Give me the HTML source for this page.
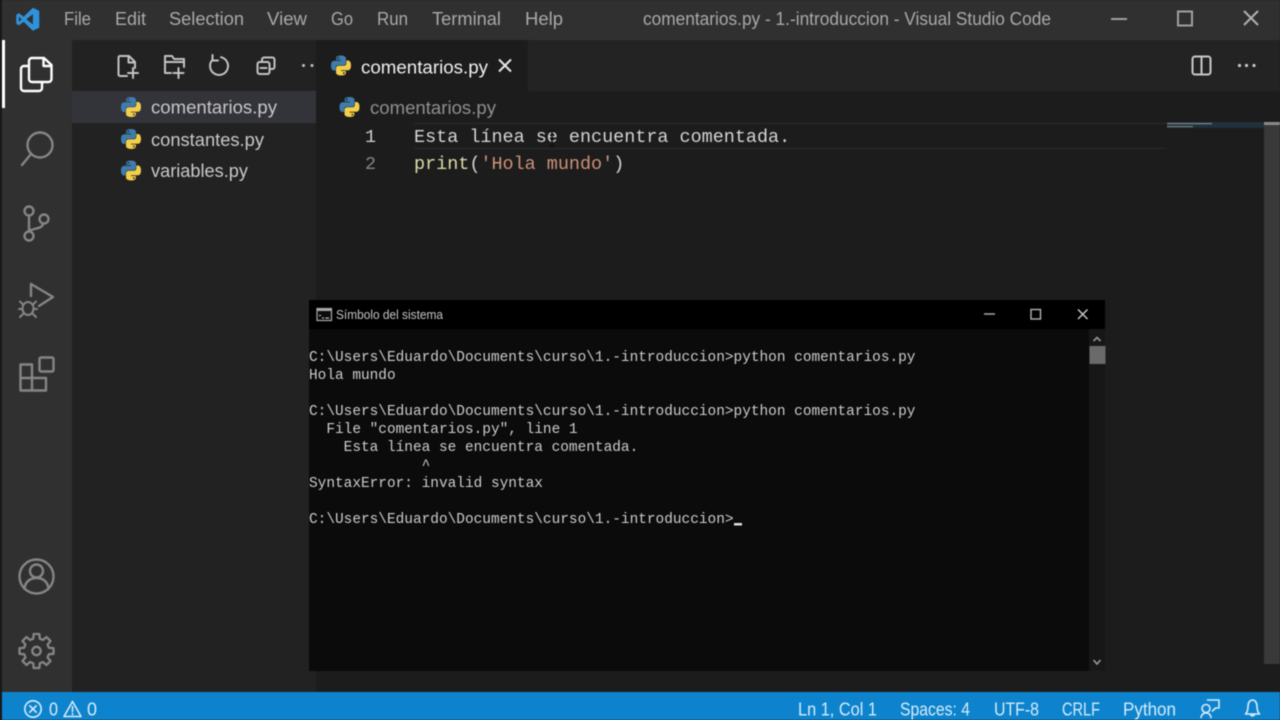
<!DOCTYPE html>
<html lang="es">
<head>
<meta charset="utf-8">
<title>comentarios.py - 1.-introduccion - Visual Studio Code</title>
<style>
html,body{margin:0;padding:0;width:1280px;height:720px;overflow:hidden;background:#1c1c1c}
svg{display:block;filter:blur(.45px)}
text{font-family:"Liberation Sans",sans-serif;font-size:18px;white-space:pre}
.m{font-family:"Liberation Mono",monospace;font-size:18.45px}
.t{font-family:"Liberation Mono",monospace;font-size:14.45px;fill:#cccccc}
.menu{fill:#a9a9a9}
.st{fill:#d5ecfa}
.i{fill:none;stroke:#858585;stroke-width:2.4;stroke-linejoin:round;stroke-linecap:round}
.b{fill:none;stroke:#c2c2c2;stroke-width:2;stroke-linejoin:round;stroke-linecap:round}
.s{fill:none;stroke:#d5ecfa;stroke-width:1.6;stroke-linejoin:round;stroke-linecap:round}
</style>
</head>
<body>
<svg width="1280" height="720" viewBox="0 0 1280 720" xmlns="http://www.w3.org/2000/svg">
<defs>
<g id="py">
<path fill="#3f7cad" d="M9.9 0C4.9 0 5.2 2.2 5.2 2.2V4.5h4.8v.7H3.3S0 4.8 0 10s2.9 5 2.9 5h1.7v-2.4s-.1-2.9 2.8-2.9h4.900s2.700 0 2.700-2.600V2.700S14.900 0 9.900 0zM7.200 1.500a.9.9 0 1 1 0 1.800.9.9 0 0 1 0-1.800z"/>
<path fill="#f2cf4a" d="M10.100 20c5 0 4.700-2.200 4.700-2.200v-2.300H10v-.7h6.700S20 15.200 20 10s-2.900-5-2.900-5h-1.700v2.400s.1 2.900-2.800 2.900H7.700s-2.700 0-2.700 2.600v4.400S5.100 20 10.100 20zm2.700-1.500a.9.9 0 1 1 0-1.800.9.9 0 0 1 0 1.800z"/>
</g>
<path id="tooth" d="M-4.900-11.600L-3.200-12.400L-2.900-17H2.900L3.200-12.400L4.900-11.600" fill="none" stroke="#858585" stroke-width="2.300" stroke-linejoin="round"/>
</defs>

<!-- base panels -->
<rect x="0" y="0" width="1280" height="720" fill="#1c1c1c"/>
<rect x="0" y="0" width="1280" height="40" fill="#303030"/>
<rect x="2" y="40" width="70" height="652" fill="#303030"/>
<rect x="72" y="40" width="244" height="652" fill="#222222"/>
<rect x="316" y="40" width="964" height="51" fill="#232323"/>
<rect x="316" y="40" width="212" height="51" fill="#1c1c1c"/>
<rect x="72" y="91" width="244" height="32" fill="#33333a"/>
<rect x="0" y="0" width="2" height="720" fill="#181818"/>
<rect x="2" y="40" width="3" height="68" fill="#ffffff"/>

<!-- VS Code logo -->
<g transform="translate(15.500,7) scale(.245)">
<path fill="#2f93dc" fill-rule="evenodd" d="M71 3L97 16V84L71 97L33 60L14 75L3 68V32L14 25L33 40ZM71 29L44 50L71 71ZM14 39V61L25 50Z"/>
</g>

<!-- menu -->
<text class="menu" x="64" y="25" textLength="27" lengthAdjust="spacingAndGlyphs">File</text>
<text class="menu" x="115" y="25" textLength="31" lengthAdjust="spacingAndGlyphs">Edit</text>
<text class="menu" x="169" y="25" textLength="75" lengthAdjust="spacingAndGlyphs">Selection</text>
<text class="menu" x="267" y="25" textLength="40" lengthAdjust="spacingAndGlyphs">View</text>
<text class="menu" x="331" y="25" textLength="22" lengthAdjust="spacingAndGlyphs">Go</text>
<text class="menu" x="377" y="25" textLength="31" lengthAdjust="spacingAndGlyphs">Run</text>
<text class="menu" x="432" y="25" textLength="69" lengthAdjust="spacingAndGlyphs">Terminal</text>
<text class="menu" x="525" y="25" textLength="38" lengthAdjust="spacingAndGlyphs">Help</text>
<text class="menu" x="643" y="25" textLength="408" lengthAdjust="spacingAndGlyphs">comentarios.py - 1.-introduccion - Visual Studio Code</text>

<!-- window buttons -->
<path d="M1111 19H1127" stroke="#a0a0a0" stroke-width="2" fill="none"/>
<rect x="1178" y="11.500" width="14" height="14" fill="none" stroke="#a0a0a0" stroke-width="2"/>
<path d="M1244 11L1258 25M1258 11L1244 25" stroke="#b0b0b0" stroke-width="2" fill="none"/>

<!-- activity bar icons -->
<path d="M28 66H24A3 3 0 0 0 21 69V88A3 3 0 0 0 24 91H39A3 3 0 0 0 42 88V82" fill="none" stroke="#fff" stroke-width="2.400" stroke-linejoin="round"/>
<path d="M32 58H44L51.500 65V79A3 3 0 0 1 48.500 82H32A3 3 0 0 1 29 79V61A3 3 0 0 1 32 58ZM43.500 58V66H51.500" fill="none" stroke="#fff" stroke-width="2.400" stroke-linejoin="round"/>

<circle cx="40" cy="145" r="12.500" class="i"/>
<path d="M31 154L22 165" class="i"/>

<circle cx="29" cy="211" r="4.500" class="i"/>
<circle cx="44" cy="219" r="4.500" class="i"/>
<circle cx="29" cy="236" r="4.500" class="i"/>
<path d="M29 216V231M43 224C42 229 34 228 29 231" class="i"/>

<path d="M31 284V296M31 284L53 297L39 306" class="i"/>
<ellipse cx="28" cy="308.500" rx="5.500" ry="6.500" class="i" style="stroke-width:2"/>
<path d="M22.500 304L20 301.500M33.500 304L36 301.500M22 309H19M34 309H37M23 314L20 317M33 314L36 317" class="i" style="stroke-width:2"/>

<rect x="39.500" y="357.500" width="14" height="14" rx="1.500" class="i"/>
<path d="M20.500 364.500H32V378H46V390.500H20.500ZM20.500 378H32V390.500" class="i"/>

<circle cx="36.500" cy="576.500" r="17" class="i"/>
<circle cx="36.500" cy="571" r="6.500" class="i"/>
<path d="M24.500 589C25 581 31 578 36.500 578C42 578 48 581 48.500 589" class="i"/>

<g transform="translate(36.500,651)">
<use href="#tooth"/>
<use href="#tooth" transform="rotate(45)"/>
<use href="#tooth" transform="rotate(90)"/>
<use href="#tooth" transform="rotate(135)"/>
<use href="#tooth" transform="rotate(180)"/>
<use href="#tooth" transform="rotate(225)"/>
<use href="#tooth" transform="rotate(270)"/>
<use href="#tooth" transform="rotate(315)"/>
<circle r="4.200" fill="none" stroke="#858585" stroke-width="2.300"/>
</g>

<!-- explorer toolbar -->
<path d="M127 76H120A1.500 1.500 0 0 1 118.500 74.500V57.500A1.500 1.500 0 0 1 120 56H129L135 62V68M128.500 56V62.500H135M133 68V78M128 73H138" class="b"/>
<path d="M171 73H165V56H172L174 59H184V67M165 62H184M178.500 68V78M173.500 73H183.500" class="b"/>
<path d="M221 57.200A9 9 0 1 1 212.500 59.800M212.500 55V60.500H218" class="b"/>
<rect x="257.500" y="62" width="12" height="12" rx="2" class="b"/>
<path d="M262 62V59.500A2 2 0 0 1 264 57.500H272.500A2 2 0 0 1 274.500 59.500V67A2 2 0 0 1 272.500 69H269.500M260.500 68H266.500" class="b"/>
<circle cx="303.500" cy="65.500" r="1.500" fill="#c2c2c2"/>
<circle cx="312" cy="65.500" r="1.500" fill="#c2c2c2"/>

<!-- file list -->
<use href="#py" x="121" y="97"/>
<use href="#py" x="121" y="129"/>
<use href="#py" x="121" y="160.500"/>
<text fill="#c8c8c8" x="151" y="113.500" textLength="126" lengthAdjust="spacingAndGlyphs">comentarios.py</text>
<text fill="#c8c8c8" x="151" y="146" textLength="113" lengthAdjust="spacingAndGlyphs">constantes.py</text>
<text fill="#c8c8c8" x="151" y="177" textLength="97" lengthAdjust="spacingAndGlyphs">variables.py</text>

<!-- tab -->
<use href="#py" x="331" y="55.500"/>
<text fill="#f0f0f0" x="361" y="73.500" textLength="127" lengthAdjust="spacingAndGlyphs">comentarios.py</text>
<path d="M499 59.500L511 71.500M511 59.500L499 71.500" stroke="#e8e8e8" stroke-width="2" fill="none"/>

<!-- editor actions -->
<rect x="1192.500" y="56.500" width="18" height="18" rx="2.500" fill="none" stroke="#c8c8c8" stroke-width="2"/>
<path d="M1201.500 56.500V74.500" stroke="#c8c8c8" stroke-width="2"/>
<circle cx="1239.500" cy="65.500" r="1.600" fill="#c8c8c8"/>
<circle cx="1246.500" cy="65.500" r="1.600" fill="#c8c8c8"/>
<circle cx="1254" cy="65.500" r="1.600" fill="#c8c8c8"/>

<!-- breadcrumb -->
<use href="#py" x="339.500" y="97"/>
<text fill="#8f8f8f" x="370" y="114" textLength="126" lengthAdjust="spacingAndGlyphs">comentarios.py</text>

<!-- current line -->
<path d="M414 123.500H1165M414 148.500H1165" fill="none" stroke="#282828" stroke-width="1.500"/>

<!-- code -->
<text class="m" x="365" y="142" fill="#cfcfcf">1</text>
<text class="m" x="365" y="169" fill="#858585">2</text>
<text class="m" x="414" y="142" fill="#d4d4d4">Esta línea se encuentra comentada.</text>
<text class="m" x="414" y="169"><tspan fill="#dcdcaa">print</tspan><tspan fill="#d4d4d4">(</tspan><tspan fill="#ce9178">'Hola mundo'</tspan><tspan fill="#d4d4d4">)</tspan></text>
<path d="M549 131H555M552 131V146M549 146H555" stroke="#111" stroke-width="1.500" fill="none"/>

<!-- minimap + scrollbar -->
<rect x="1167" y="122" width="97" height="6" fill="#22303a"/>
<rect x="1167" y="123" width="45" height="1.200" fill="#7b8a94"/>
<rect x="1167" y="126" width="26" height="1.200" fill="#77807f"/>
<rect x="1264" y="122" width="16" height="542" fill="#393939"/>
<rect x="1264" y="122" width="16" height="3" fill="#8a8a8a"/>

<!-- terminal window -->
<rect x="309" y="300" width="796" height="371" fill="#0b0b0b"/>
<rect x="309" y="300" width="796" height="29" fill="#000000"/>
<rect x="1089" y="329" width="16" height="342" fill="#171717"/>
<rect x="317" y="308.500" width="14.500" height="12" fill="#0c0c0c" stroke="#a8a8a8" stroke-width="1.200"/>
<rect x="317" y="308.500" width="14.500" height="2.500" fill="#a8a8a8"/>
<path d="M319 315.500H321M322 318H324M325.500 318H329" stroke="#dddddd" stroke-width="1"/>
<text fill="#c4c4c4" x="336" y="319" style="font-size:12.500px" textLength="107" lengthAdjust="spacingAndGlyphs">Símbolo del sistema</text>
<path d="M984 314H995" stroke="#a8a8a8" stroke-width="1.500"/>
<rect x="1031" y="309.500" width="9.500" height="9.500" fill="none" stroke="#b4b4b4" stroke-width="1.400"/>
<path d="M1078 309.500L1087.500 319M1087.500 309.500L1078 319" stroke="#cfcfcf" stroke-width="1.400" fill="none"/>
<path d="M1093.500 341L1097 337.500L1100.500 341" fill="none" stroke="#999" stroke-width="1.600"/>
<rect x="1089.500" y="346" width="16" height="18" fill="#6a6a6a"/>
<path d="M1093.500 660L1097 664L1100.500 660" fill="none" stroke="#999" stroke-width="1.600"/>

<text class="t" x="309" y="361">C:\Users\Eduardo\Documents\curso\1.-introduccion&gt;python comentarios.py</text>
<text class="t" x="309" y="379">Hola mundo</text>
<text class="t" x="309" y="415">C:\Users\Eduardo\Documents\curso\1.-introduccion&gt;python comentarios.py</text>
<text class="t" x="309" y="433">  File "comentarios.py", line 1</text>
<text class="t" x="309" y="451">    Esta línea se encuentra comentada.</text>
<text class="t" x="309" y="469">             ^</text>
<text class="t" x="309" y="487">SyntaxError: invalid syntax</text>
<text class="t" x="309" y="523">C:\Users\Eduardo\Documents\curso\1.-introduccion&gt;</text>
<rect x="734" y="523" width="8" height="2.500" fill="#e0e0e0"/>

<!-- status bar -->
<rect x="2" y="692" width="1278" height="28" fill="#0d83cd"/>
<circle cx="33" cy="709" r="8.200" class="s"/>
<path d="M29.800 705.800L36.200 712.200M36.200 705.800L29.800 712.200" class="s"/>
<text class="st" x="49" y="715.500" textLength="9" lengthAdjust="spacingAndGlyphs">0</text>
<path d="M72.500 701.500L81 716.500H64ZM72.500 706.500V711.500M72.500 713.500V714.500" class="s"/>
<text class="st" x="87" y="715.500" textLength="10" lengthAdjust="spacingAndGlyphs">0</text>
<text class="st" x="798" y="715.500" textLength="79" lengthAdjust="spacingAndGlyphs">Ln 1, Col 1</text>
<text class="st" x="900" y="715.500" textLength="70" lengthAdjust="spacingAndGlyphs">Spaces: 4</text>
<text class="st" x="994" y="715.500" textLength="45" lengthAdjust="spacingAndGlyphs">UTF-8</text>
<text class="st" x="1062" y="715.500" textLength="38" lengthAdjust="spacingAndGlyphs">CRLF</text>
<text class="st" x="1123" y="715.500" textLength="53" lengthAdjust="spacingAndGlyphs">Python</text>
<path d="M1207.500 700H1219V708H1215.500L1212.500 711" class="s"/>
<circle cx="1206" cy="708.500" r="4" class="s"/>
<path d="M1201 717.500C1201.500 714.500 1203.500 713 1206 713C1208.500 713 1210.500 714.500 1211 717.500" class="s"/>
<path d="M1245.500 714C1247.500 712 1248 710 1248 706.500C1248 702.500 1250 700 1252.500 700C1255 700 1257 702.500 1257 706.500C1257 710 1257.500 712 1259.500 714ZM1250.500 714.500A2.200 2.200 0 0 0 1254.500 714.500" class="s"/>
</svg>
</body>
</html>
